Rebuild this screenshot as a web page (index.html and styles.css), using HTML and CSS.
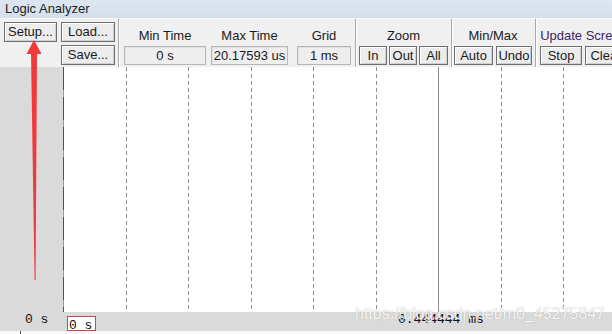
FILE: index.html
```html
<!DOCTYPE html>
<html lang="en">

<head>
    <meta charset="UTF-8">
    <title>Logic Analyzer</title>
    <link rel="stylesheet" href="styles.css">
</head>

<body>
    <div class="window">
        <div class="titlebar">Logic Analyzer</div>

        <div class="toolbar">
            <div class="files">
                <div class="btn setup">Setup...</div>
                <div class="stack">
                    <div class="btn load">Load...</div>
                    <div class="btn load">Save...</div>
                </div>
            </div>
            <div class="sep"></div>

            <div class="field min">
                <div class="label">Min Time</div>
                <div class="value">0 s</div>
            </div>
            <div class="field max">
                <div class="label">Max Time</div>
                <div class="value">20.17593 us</div>
            </div>
            <div class="field grid">
                <div class="label">Grid</div>
                <div class="value">1 ms</div>
            </div>
            <div class="sep"></div>

            <div class="group zoom">
                <div class="label">Zoom</div>
                <div class="row">
                    <div class="btn w28">In</div>
                    <div class="btn w28">Out</div>
                    <div class="btn w29">All</div>
                </div>
            </div>
            <div class="sep"></div>

            <div class="group minmax">
                <div class="label">Min/Max</div>
                <div class="row">
                    <div class="btn w39">Auto</div>
                    <div class="btn w36">Undo</div>
                </div>
            </div>
            <div class="sep"></div>

            <div class="group update">
                <div class="label purple">Update Screen</div>
                <div class="row">
                    <div class="btn w42">Stop</div>
                    <div class="btn w42">Clear</div>
                </div>
            </div>
        </div>

        <div class="main">
            <div class="names"></div>
            <div class="cursor-line"></div>
            <div class="plot">
                <div class="col"></div>
                <div class="col"></div>
                <div class="col"></div>
                <div class="col"></div>
                <div class="col"></div>
                <div class="col solid"></div>
                <div class="col"></div>
                <div class="col"></div>
                <div class="col"></div>
            </div>
        </div>

        <div class="status">
            <div class="status-left">0 s</div>
            <div class="start-box">0 s</div>
            <div class="cursor-time">0.444444 ms</div>
        </div>
        <div class="foot"><span class="tick"></span></div>

        <div class="watermark">https://blog.csdn.net/m0_45275847</div>

        <svg class="arrow" width="612" height="334" viewBox="0 0 612 334">
            <polygon points="34,40 26.5,54 41.5,54" fill="#f03a3a" />
            <polygon points="31,53 37,53 35.6,280 34.6,280" fill="#f03a3a" />
        </svg>
    </div>
</body>

</html>
```

FILE: styles.css
```css
body {
    margin: 0;
    padding: 0;
    font-family: "Liberation Sans", Arial, sans-serif;
    font-size: 13px;
    color: #1a1a1a;
    background: #ffffff;
}

.window {
    position: relative;
    width: 612px;
    height: 334px;
    overflow: hidden;
    display: flex;
    flex-direction: column;
}

.titlebar {
    height: 18px;
    line-height: 18px;
    padding-left: 5px;
    background: linear-gradient(#dde6f0, #d4dfeb);
    border-bottom: 1px solid #f6f8fb;
    color: #1e1e1e;
    flex-shrink: 0;
}

/* toolbar */
.toolbar {
    height: 48px;
    box-sizing: border-box;
    padding: 3px 0 0 4px;
    background: #f0f0f0;
    display: flex;
    white-space: nowrap;
    overflow: hidden;
    flex-shrink: 0;
}

.btn {
    box-sizing: border-box;
    height: 19px;
    line-height: 17px;
    text-align: center;
    background: #ececec;
    border: 1px solid #6e6e6e;
    box-shadow: inset 1px 1px 0 #fdfdfd, inset -1px -1px 0 #d0d0d0;
    flex-shrink: 0;
    overflow: hidden;
}

.files {
    display: flex;
    gap: 4px;
    flex-shrink: 0;
}

.setup {
    width: 53px;
    height: 20px;
    line-height: 18px;
}

.stack {
    display: flex;
    flex-direction: column;
    gap: 3px;
}

.load {
    width: 54px;
    height: 20px;
    line-height: 18px;
}

.sep {
    width: 0;
    margin: -3px 3px 0 3px;
    border-left: 1px solid #a8a8a8;
    border-right: 1px solid #ffffff;
    flex-shrink: 0;
}

.label {
    margin-top: 6px;
    line-height: 16px;
    text-align: center;
}

.purple {
    color: #3b2668;
}

.field,
.group {
    display: flex;
    flex-direction: column;
    flex-shrink: 0;
}

.value {
    box-sizing: border-box;
    margin-top: 2px;
    height: 19px;
    line-height: 17px;
    text-align: center;
    background: #eeeeee;
    border: 1px solid #b7b7b7;
    box-shadow: inset 1px 1px 0 #e2e2e2;
}

.min {
    width: 82px;
    margin-left: 1px;
    margin-right: 5px;
}

.max {
    width: 77px;
    margin-right: 9px;
}

.grid {
    width: 54px;
    margin-right: 1px;
}

.row {
    margin-top: 2px;
    display: flex;
    gap: 2px;
}

.zoom {
    margin-left: -1px;
}

.minmax .row,
.update .row {
    gap: 3px;
}

.minmax {
    margin-left: -2px;
}

.w28 { width: 28px; }
.w29 { width: 29px; }
.w36 { width: 36px; }
.w39 { width: 39px; }
.w42 { width: 42px; }

/* signal area */
.main {
    height: 245px;
    display: flex;
    flex-shrink: 0;
}

.names {
    width: 63px;
    flex-shrink: 0;
    background: #dadada;
}

.cursor-line {
    width: 1px;
    flex-shrink: 0;
    background: repeating-linear-gradient(to bottom, #3a3aff 0 23px, #9a9a9a 23px 30px);
}

.plot {
    flex: 1;
    min-width: 0;
    overflow: hidden;
    background: #ffffff;
    display: flex;
}

.col {
    flex: 0 0 62.5px;
    background-image: repeating-linear-gradient(to bottom, #8e8e8e 0 4px, transparent 4px 7px);
    background-size: 1px 100%;
    background-position: right top;
    background-repeat: no-repeat;
}

.col.solid {
    background-image: linear-gradient(#8a8a8a, #8a8a8a);
}

/* status line */
.status {
    height: 19px;
    background: #dadada;
    display: flex;
    font-family: "Liberation Mono", "Courier New", monospace;
    font-size: 13px;
    color: #111111;
    flex-shrink: 0;
}

.status-left {
    width: 38px;
    padding-left: 25px;
    line-height: 15px;
    flex-shrink: 0;
}

.start-box {
    box-sizing: border-box;
    margin: 4px 0 0 4px;
    width: 29px;
    height: 15px;
    padding-left: 1px;
    line-height: 17px;
    overflow: hidden;
    background: #ffffff;
    border: 1px solid #c84848;
    flex-shrink: 0;
}

.cursor-time {
    margin-left: 302px;
    line-height: 15px;
    flex-shrink: 0;
}

.foot {
    flex: 1;
    background: #f7f7f7;
    position: relative;
}

.tick {
    position: absolute;
    left: 20px;
    top: 0;
    width: 1px;
    height: 3px;
    background: #555555;
}

.watermark {
    position: absolute;
    left: 355px;
    top: 305px;
    font-size: 16px;
    color: rgba(255, 255, 255, 0.9);
    text-shadow: 0 0 1px rgba(120, 120, 120, 0.6);
}

.arrow {
    position: absolute;
    left: 0;
    top: 0;
    pointer-events: none;
}
```
